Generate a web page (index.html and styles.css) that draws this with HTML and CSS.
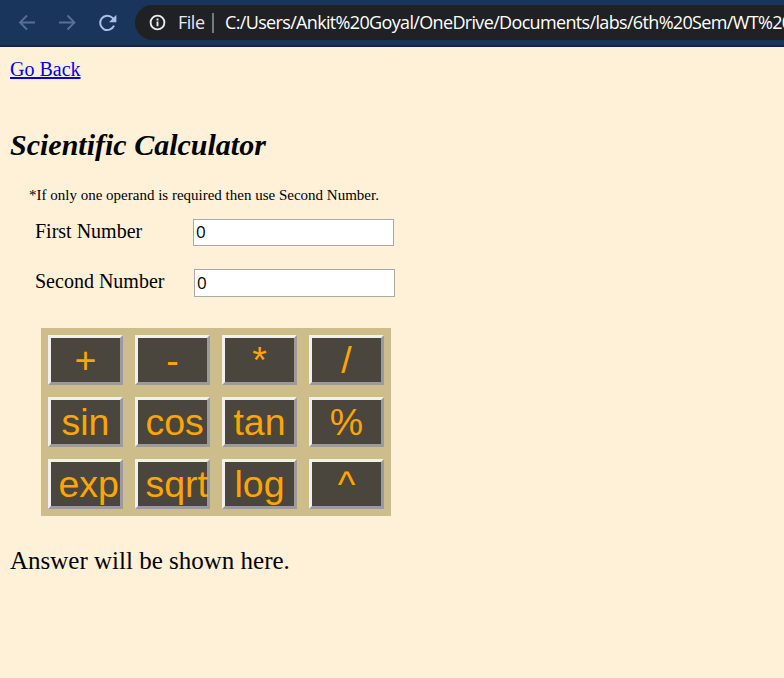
FILE: index.html
```
<!DOCTYPE html>
<html lang="en">
<head>
<meta charset="utf-8">
<title>Scientific Calculator</title>
<link rel="stylesheet" href="styles.css">
</head>
<body>
<header class="toolbar">
  <svg class="nav" viewBox="0 0 20 20"><path d="M18 9.5H3M10 2.5L3 9.5l7 7"/></svg>
  <svg class="nav" viewBox="0 0 20 20"><path d="M2 9.5H17.5M10.5 2.5l7 7-7 7"/></svg>
  <svg class="nav reload" viewBox="0 0 20 20"><path d="M17 12.6A7.2 7.2 0 1 1 15.6 4.9L16.5 6"/><path class="tip" d="M19.4 1.8v7.4h-7.4z"/></svg>
  <div class="address">
    <svg class="info" viewBox="0 0 18 18"><circle cx="9" cy="9" r="7.3"/><path d="M9 8v5M9 4.8v2"/></svg>
    <span class="scheme">File</span>
    <span class="divider"></span>
    <span class="url">C:/Users/Ankit%20Goyal/OneDrive/Documents/labs/6th%20Sem/WT%20</span>
  </div>
</header>
<main>
  <a class="back" href="#">Go Back</a>
  <h1>Scientific Calculator</h1>
  <p class="note">*If only one operand is required then use Second Number.</p>
  <div class="field"><label for="first">First Number</label><input id="first" type="text" value="0"></div>
  <div class="field second"><label for="second">Second Number</label><input id="second" type="text" value="0"></div>
  <div class="keys">
    <button>+</button><button>-</button><button>*</button><button>/</button>
    <button>sin</button><button>cos</button><button>tan</button><button>%</button>
    <button>exp</button><button>sqrt</button><button>log</button><button>^</button>
  </div>
  <p class="answer">Answer will be shown here.</p>
</main>
</body>
</html>
```
FILE: styles.css
```
* { box-sizing: border-box; }
body {
  margin: 0;
  height: 678px;
  overflow: hidden;
  background: #fff0d8;
  color: #000;
  font-family: "Liberation Serif", serif;
  font-size: 20px;
}
.toolbar {
  display: flex;
  align-items: center;
  height: 47px;
  padding: 0 0 0 17px;
  background: #1a355b;
  border-bottom: 2px solid #12253f;
}
.nav {
  flex: none;
  width: 20px;
  height: 20px;
  margin-right: 20px;
  fill: none;
  stroke: #56709a;
  stroke-width: 1.8;
}
.reload { stroke: #a9c0e8; margin-right: 18px; stroke-width: 2; }
.reload .tip { fill: #a9c0e8; stroke: none; }
.address {
  display: flex;
  align-items: center;
  flex: 1;
  min-width: 0;
  height: 35px;
  padding-left: 14px;
  overflow: hidden;
  background: #202124;
  border-radius: 18px 0 0 18px;
  color: #fff;
  font-family: "Open Sans", sans-serif;
  font-size: 18px;
  white-space: nowrap;
}
.info { flex: none; width: 17px; height: 17px; fill: none; stroke: #e8eaed; stroke-width: 2; }
.scheme { flex: none; width: 27px; margin-left: 12px; padding-bottom: 2px; color: #e8eaed; letter-spacing: -.5px; }
.divider { flex: none; width: 2px; height: 20px; margin: 0 11px 0 7px; background: #77797d; }
.url { padding-bottom: 2px; letter-spacing: -.66px; }
main { padding: 11px 10px 0; }
.back { display: block; width: max-content; line-height: 23px; color: #0000ee; }
h1 { margin: 47px 0 0; font-size: 30px; line-height: 34px; font-style: italic; font-weight: bold; }
.note { margin: 24px 0 0 19px; font-size: 15px; line-height: 18px; }
.field { display: flex; height: 27px; margin: 15px 0 0 25px; }
label { width: 158px; line-height: 25px; }
.field.second { height: 28px; margin-top: 23px; }
.second label { width: 159px; }
input {
  width: 201px;
  height: 100%;
  padding: 0 2px 2px;
  border: 1px solid #a9a9a9;
  background: #fff;
  color: #000;
  font: 17px "Open Sans", sans-serif;
}
.keys {
  display: grid;
  grid-template-columns: repeat(4, 75px);
  grid-auto-rows: 50px;
  gap: 12px;
  width: 350px;
  height: 188px;
  margin: 31px 0 0 31px;
  padding: 7px;
  background: #cdbd8b;
}
button {
  padding: 0 7.5px;
  border: 3px solid;
  border-color: #f0f0f0 #9b9b9b #9b9b9b #f0f0f0;
  background: #4a453d;
  color: orange;
  font: 37.5px/43px "Liberation Sans", sans-serif;
}
.answer { margin: 30px 0 0; font-size: 25px; line-height: 29px; }
```
